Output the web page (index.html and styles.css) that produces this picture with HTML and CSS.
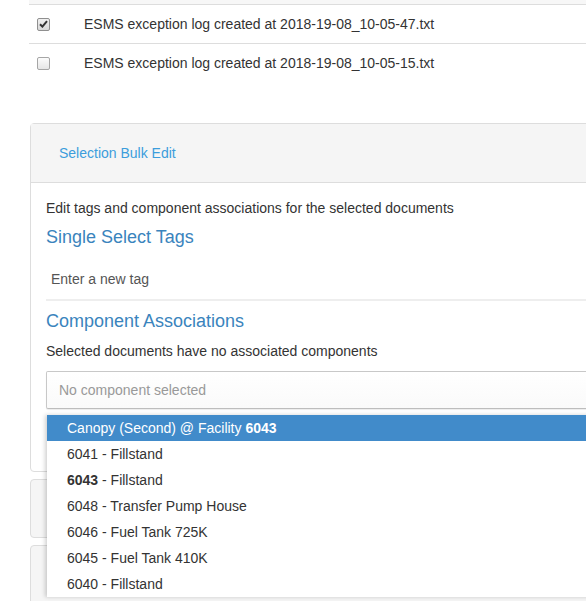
FILE: index.html
```html
<!DOCTYPE html>
<html>
<head>
<meta charset="utf-8">
<link rel="stylesheet" href="styles.css">
</head>
<body>
<div class="page">
  <div class="table-top"></div>
  <div class="doc-row">
    <span class="cb checked"><svg width="9" height="8" viewBox="0 0 9 8"><path d="M1 4.2 L3.4 6.6 L8 1.2" fill="none" stroke="#333" stroke-width="2"/></svg></span>
    <span class="doc-name">ESMS exception log created at 2018-19-08_10-05-47.txt</span>
  </div>
  <div class="doc-row">
    <span class="cb"></span>
    <span class="doc-name">ESMS exception log created at 2018-19-08_10-05-15.txt</span>
  </div>

  <div class="panel main-panel">
    <div class="panel-heading"><a class="panel-link">Selection Bulk Edit</a></div>
    <div class="panel-body">
      <p class="intro">Edit tags and component associations for the selected documents</p>
      <h3 class="section-title">Single Select Tags</h3>
      <div class="tag-input">Enter a new tag</div>
      <h3 class="section-title comp-title">Component Associations</h3>
      <p class="note">Selected documents have no associated components</p>
      <div class="select-wrap">
        <div class="select-box">No component selected</div>
        <ul class="dropdown">
          <li class="active">Canopy (Second) @ Facility <b>6043</b></li>
          <li>6041 - Fillstand</li>
          <li><b>6043</b> - Fillstand</li>
          <li>6048 - Transfer Pump House</li>
          <li>6046 - Fuel Tank 725K</li>
          <li>6045 - Fuel Tank 410K</li>
          <li>6040 - Fillstand</li>
        </ul>
      </div>
    </div>
  </div>
  <div class="panel stub stub-1"></div>
  <div class="panel stub stub-2"></div>
</div>
</body>
</html>
```

FILE: styles.css
```css
html, body {
  margin: 0;
  padding: 0;
  background: #fff;
  overflow: hidden;
  height: 601px;
}
body {
  font-family: "Liberation Sans", Arial, sans-serif;
  font-size: 14px;
  color: #333;
}
.page {
  margin-left: 29px;
  width: 1000px;
}
.table-top {
  height: 4px;
  background: #f7f7f7;
  border-bottom: 1px solid #ddd;
}
.doc-row {
  height: 38px;
  display: flex;
  align-items: center;
}
.doc-row + .doc-row {
  border-top: 1px solid #ddd;
}
.cb {
  width: 11px;
  height: 11px;
  margin-left: 8px;
  border: 1px solid #a6a6a6;
  border-radius: 2px;
  background: linear-gradient(#fcfcfc, #e6e6e6);
  display: flex;
  align-items: center;
  justify-content: center;
}
.cb.checked {
  background: linear-gradient(#f0f0f0, #d8d8d8);
  border-color: #8f8f8f;
}
.doc-name {
  margin-left: 34px;
  line-height: 20px;
}
.panel {
  margin-left: 1px;
  border: 1px solid #ddd;
  border-radius: 4px 0 0 4px;
}
.main-panel {
  margin-top: 41px;
  height: 347px;
}
.panel-heading {
  background: #f5f5f5;
  border-bottom: 1px solid #ddd;
  height: 58px;
  display: flex;
  align-items: center;
  padding-left: 28px;
}
.panel-link {
  color: #3c9ddc;
  line-height: 20px;
}
.panel-body {
  padding: 15px 0 0 15px;
}
.intro, .note {
  margin: 0;
  line-height: 20px;
}
.section-title {
  margin: 7px 0 0;
  font-size: 18px;
  font-weight: normal;
  color: #3a84bd;
  line-height: 24px;
}
.tag-input {
  margin-top: 10px;
  padding-left: 5px;
  height: 40px;
  line-height: 40px;
  color: #555;
  border-bottom: 2px solid #eee;
}
.comp-title {
  margin-top: 8px;
}
.note {
  margin-top: 8px;
}
.select-wrap {
  position: relative;
  margin-top: 10px;
}
.select-box {
  height: 36px;
  line-height: 36px;
  border: 1px solid #c8c8c8;
  border-bottom-color: #bdbdbd;
  border-radius: 2px 0 0 2px;
  background: linear-gradient(#fff, #fafafa);
  color: #999;
  padding-left: 12px;
  box-shadow: 0 1px 1px rgba(0,0,0,0.08);
}
.dropdown {
  position: absolute;
  left: 1px;
  top: 44px;
  width: 900px;
  margin: 0;
  padding: 0;
  list-style: none;
  background: #fff;
  box-shadow: -2px 0 4px rgba(0,0,0,0.18);
  z-index: 5;
}
.dropdown li {
  height: 26px;
  line-height: 26px;
  padding-left: 20px;
  color: #333;
}
.dropdown li.active {
  background: #418bca;
  color: #fff;
}
.stub {
  background: #f5f5f5;
}
.stub-1 {
  margin-top: 7px;
  height: 57px;
}
.stub-2 {
  margin-top: 7px;
  height: 80px;
}
```
